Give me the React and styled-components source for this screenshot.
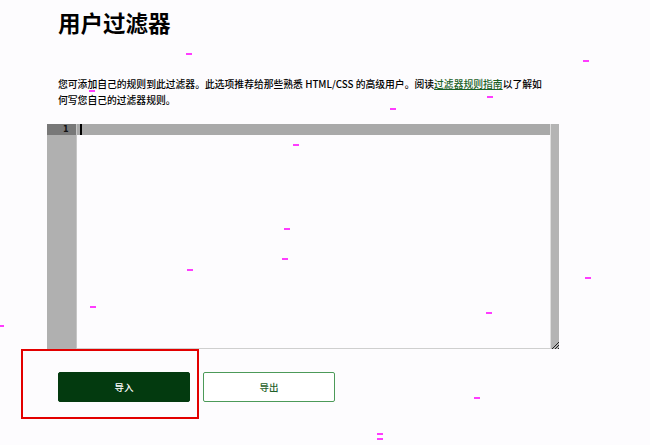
import styled, { createGlobalStyle } from "styled-components";

const GlobalStyle = createGlobalStyle`
  html, body {
    margin: 0;
    padding: 0;
    background: #fdfcfe;
  }
  body {
    font-family: "Noto Sans CJK SC", "Noto Sans", sans-serif;
    color: #111;
  }
`;

const specks = [
  [186, 53], [583, 60], [487, 96], [390, 108], [89, 90], [293, 144],
  [284, 228], [282, 258], [187, 269], [585, 277], [90, 306], [486, 312],
  [-2, 325], [474, 397], [377, 433], [377, 438],
];

export default function App() {
  return (
    <>
      <GlobalStyle />
      <Page>
        <Title>用户过滤器</Title>
        <Intro>
          您可添加自己的规则到此过滤器。此选项推荐给那些熟悉 HTML/CSS
          的高级用户。阅读<GuideLink href="#">过滤器规则指南</GuideLink>以了解如何写您自己的过滤器规则。
        </Intro>

        <Editor>
          <Gutter>
            <LineNumber active>1</LineNumber>
          </Gutter>
          <Code>
            <CodeLine active>
              <Cursor />
            </CodeLine>
          </Code>
          <ScrollStrip>
            <Grip viewBox="0 0 7 7">
              <path d="M7 0L0 7M7 3L3 7M7 6L6 7" stroke="#222" strokeWidth="1" />
            </Grip>
          </ScrollStrip>
        </Editor>

        <Actions>
          <Button primary>导入</Button>
          <Button>导出</Button>
          <Highlight />
        </Actions>
      </Page>
      {specks.map(([x, y], i) => (
        <Speck key={i} style={{ left: x, top: y }} />
      ))}
    </>
  );
}

const Page = styled.main`
  position: relative;
  padding: 4px 0 40px 47px;
  width: 512px;
`;

const Title = styled.h1`
  margin: 0 0 0 11px;
  font-size: 22.5px;
  line-height: 36px;
  font-weight: 700;
  color: #000;
`;

const Intro = styled.p`
  margin: 36px 0 0 11px;
  width: 492px;
  font-size: 9.8px;
  font-weight: 500;
  line-height: 16px;
  color: #000;
`;

const GuideLink = styled.a`
  color: #1a5f25;
  text-decoration: underline;
  text-underline-offset: 1px;
`;

const Editor = styled.div`
  margin-top: 16px;
  height: 225px;
  display: flex;
  background: #fdfcfe;
`;

const Gutter = styled.div`
  width: 30px;
  flex-shrink: 0;
  background: #b0b0b0;
  border-right: 1px solid #c6c6c6;
  box-sizing: border-box;
`;

const LineNumber = styled.div`
  height: 11px;
  padding-left: 16px;
  font-family: "DejaVu Sans", sans-serif;
  font-size: 8px;
  font-weight: 700;
  line-height: 11px;
  color: #111;
  background: ${(p) => (p.active ? "#787878" : "transparent")};
`;

const Code = styled.div`
  flex: 1;
  border-bottom: 1px solid #cfcfcf;
  border-right: 1px solid #dedede;
`;

const CodeLine = styled.div`
  height: 11px;
  padding-left: 3px;
  display: flex;
  align-items: center;
  background: ${(p) => (p.active ? "#a9a9a9" : "transparent")};
`;

const Cursor = styled.span`
  width: 2px;
  height: 11px;
  background: #000;
`;

const ScrollStrip = styled.div`
  position: relative;
  width: 8px;
  flex-shrink: 0;
  background: #b4b4b4;
`;

const Grip = styled.svg`
  position: absolute;
  right: 0;
  bottom: 0;
  width: 7px;
  height: 7px;
`;

const Actions = styled.div`
  position: relative;
  display: flex;
  gap: 13px;
  margin: 23px 0 0 11px;
`;

const Button = styled.button`
  width: 132px;
  height: 30px;
  border-radius: 2px;
  font-family: "Noto Sans CJK SC", sans-serif;
  font-size: 9.5px;
  font-weight: 500;
  cursor: pointer;
  border: 1px solid ${(p) => (p.primary ? "#033a0f" : "#4c9a59")};
  background: ${(p) => (p.primary ? "#033a0f" : "#ffffff")};
  color: ${(p) => (p.primary ? "#ffffff" : "#1f5f2a")};
`;

const Highlight = styled.div`
  position: absolute;
  left: -37px;
  top: -23px;
  width: 178px;
  height: 70px;
  box-sizing: border-box;
  border: 2px solid #e30000;
  pointer-events: none;
`;

const Speck = styled.span`
  position: absolute;
  width: 6px;
  height: 2px;
  background: #ff3cff;
`;
